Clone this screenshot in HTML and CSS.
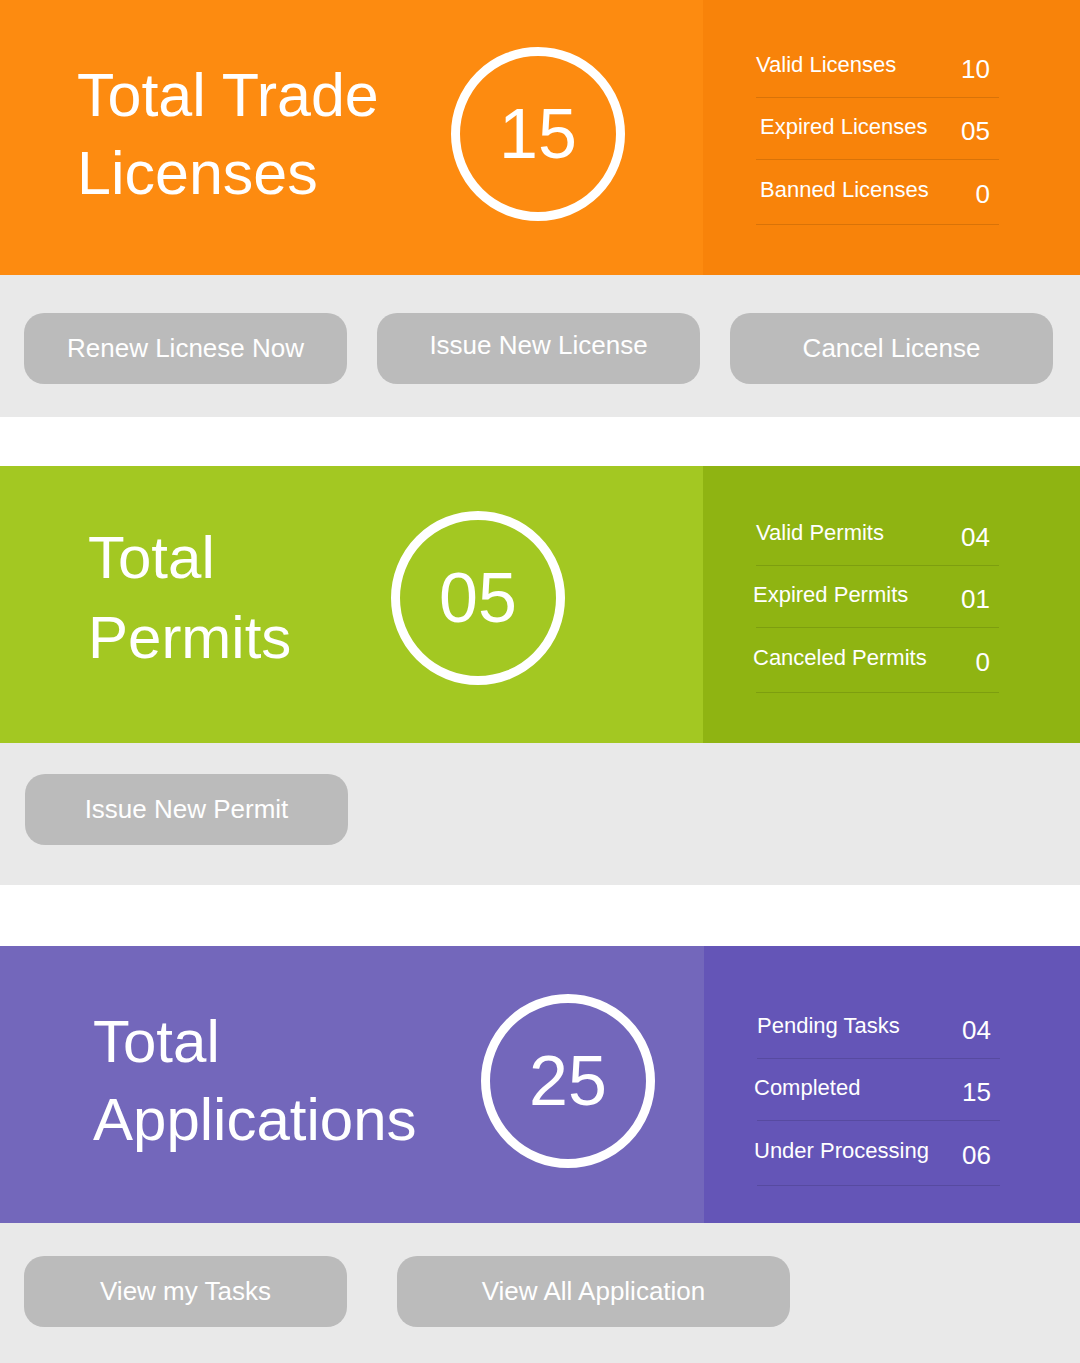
FILE: index.html
```html
<!DOCTYPE html>
<html lang="en">
<head>
    <meta charset="UTF-8">
    <meta name="viewport" content="width=device-width, initial-scale=1.0">
    <title>Licensing Dashboard</title>
    <link rel="stylesheet" href="styles.css">
</head>
<body>
    <section class="block licenses">
        <div class="summary">
            <div class="overview">
                <h2 class="title">Total Trade<br>Licenses</h2>
                <div class="count">15</div>
            </div>
            <ul class="stats">
                <li><span>Valid Licenses</span><b>10</b></li>
                <li><span>Expired Licenses</span><b>05</b></li>
                <li><span>Banned Licenses</span><b>0</b></li>
            </ul>
        </div>
        <div class="actions">
            <button>Renew Licnese Now</button>
            <button class="raised">Issue New License</button>
            <button>Cancel License</button>
        </div>
    </section>

    <section class="block permits">
        <div class="summary">
            <div class="overview">
                <h2 class="title">Total<br>Permits</h2>
                <div class="count">05</div>
            </div>
            <ul class="stats">
                <li><span>Valid Permits</span><b>04</b></li>
                <li><span>Expired Permits</span><b>01</b></li>
                <li><span>Canceled Permits</span><b>0</b></li>
            </ul>
        </div>
        <div class="actions">
            <button>Issue New Permit</button>
        </div>
    </section>

    <section class="block applications">
        <div class="summary">
            <div class="overview">
                <h2 class="title">Total<br>Applications</h2>
                <div class="count">25</div>
            </div>
            <ul class="stats">
                <li><span>Pending Tasks</span><b>04</b></li>
                <li><span>Completed</span><b>15</b></li>
                <li><span>Under Processing</span><b>06</b></li>
            </ul>
        </div>
        <div class="actions">
            <button>View my Tasks</button>
            <button class="wide">View All Application</button>
        </div>
    </section>
</body>
</html>
```

FILE: styles.css
```css
body {
    margin: 0;
    font-family: 'Liberation Sans', Arial, sans-serif;
    background: #fff;
    color: #fff;
}
.block {
    --title-x: 77px;
    --circle-x: 451px;
    --stats-top: 36px;
    --actions-top: 38px;
    --band: 275px;
    --main: #fd8b10;
    --side: #f8830a;
}
.permits {
    --title-x: 88px;
    --circle-x: 391px;
    --stats-top: 38px;
    --actions-top: 31px;
    --band: 277px;
    --main: #a3c822;
    --side: #8fb412;
    margin-top: 49px;
}
.applications {
    --title-x: 93px;
    --circle-x: 481px;
    --stats-top: 51px;
    --actions-top: 33px;
    --band: 277px;
    --main: #7367bb;
    --side: #6455b7;
    margin-top: 61px;
}
.summary {
    display: flex;
    height: var(--band);
    background: var(--side);
}
.overview {
    width: 703px;
    display: grid;
    grid-template-columns: var(--circle-x) 174px;
    align-items: center;
    padding-bottom: 7px;
    box-sizing: border-box;
    background: var(--main);
}
.permits .overview {
    padding-bottom: 14px;
}
.applications .overview {
    width: 704px;
}
.title {
    margin: 0;
    padding-left: var(--title-x);
    font-size: 60px;
    font-weight: normal;
    line-height: 78px;
}
.licenses .title {
    font-size: 61px;
}
.permits .title {
    line-height: 80px;
}
.count {
    width: 174px;
    height: 174px;
    box-sizing: border-box;
    border: 9px solid #fff;
    border-radius: 50%;
    display: flex;
    align-items: center;
    justify-content: center;
    font-size: 70px;
}
.stats {
    list-style: none;
    margin: 0 0 0 53px;
    padding: var(--stats-top) 0 0;
    width: 243px;
}
.stats li {
    height: 62px;
    box-sizing: border-box;
    display: flex;
    align-items: center;
    justify-content: space-between;
    padding: 0 9px 0 0;
    border-bottom: 1px solid rgba(0, 0, 0, 0.12);
}
.stats li:last-child {
    height: 65px;
}
.stats span {
    font-size: 22px;
    line-height: 24px;
    margin-top: -4px;
}
.licenses .stats li + li span {
    padding-left: 4px;
}
.permits .stats li + li span,
.applications .stats li + li span {
    margin-left: -3px;
}
.stats b {
    font-size: 26px;
    font-weight: normal;
    line-height: 24px;
    margin-top: 4px;
}
.actions {
    display: flex;
    gap: 30px;
    height: 142px;
    box-sizing: border-box;
    padding: var(--actions-top) 24px 0;
    background: #e9e9e9;
}
.permits .actions {
    padding-left: 25px;
}
.applications .actions {
    height: 140px;
    gap: 50px;
}
.actions button {
    width: 323px;
    height: 71px;
    border: none;
    border-radius: 20px;
    background: #bbb;
    color: #fff;
    font-family: inherit;
    font-size: 26px;
    padding: 0;
}
.actions .raised {
    padding-bottom: 6px;
}
.actions .wide {
    width: 393px;
}
```
